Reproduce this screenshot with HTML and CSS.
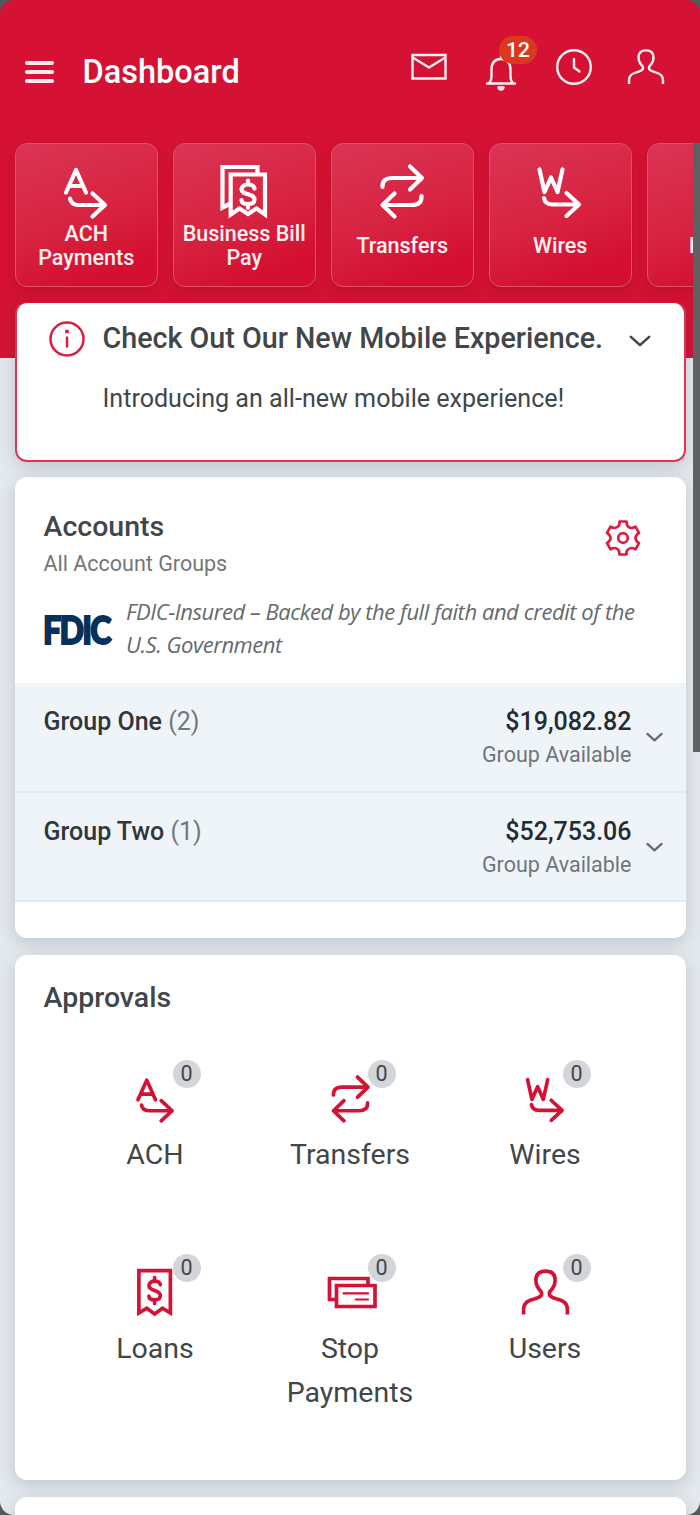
FILE: index.html
```html
<!DOCTYPE html>
<html lang="en">
<head>
<meta charset="utf-8">
<title>Dashboard</title>
<link rel="stylesheet" href="styles.css">
</head>
<body>
<svg class="defs" aria-hidden="true">
  <symbol id="ach" viewBox="1.500 0 56 56"><path d="M9.500 29.500 19.500 7 29.500 29.500M13 23h13M13.500 35.500q1 6.500 8.500 6.500h26M36 30.500 48.500 42 36 53.500"/></symbol>
  <symbol id="transfer" viewBox="0 0 56 56"><path d="M8.500 24v-1q0-8 10-8H48M36 3.500 48 15 36 26.500M47.500 33v1q0 8-10 8H8.500M20.500 30.500 8.500 42l12 11.500"/></symbol>
  <symbol id="wire" viewBox="0.500 0 56 56"><path d="m8 6.500 5 22.500 6.500-14.500L26 29l5-22.500M12.500 35q1 6.500 8.500 6.500h26M35 30 47.500 41.500 35 53"/></symbol>
  <symbol id="bills" viewBox="0.500 0.500 56 56"><path class="miter" d="M42 11V4.500H7V45l8-4M15.200 12H49.500v40L41 46l-8.500 5.500L24 46l-8.800 6z"/><path d="M39 26q-1-4-6.500-4t-6.500 4.500c0 6.500 13 4 13 10.500q0 4.500-6.500 4.500T26 37.500M32.500 18v4M32.500 41.500v4"/></symbol>
  <symbol id="loan" viewBox="1 1 56 56"><path class="miter" d="M10 4h36v48.500L37 47l-9 6.500L19 47l-9 5.500z"/><path d="M34.500 20q-1-4-6.500-4t-6.500 5c0 7 13 4.500 13 11.500q0 5-6.500 5t-6.500-4.500M28 12v4M28 37.500v4"/></symbol>
  <symbol id="stop" viewBox="1 1 56 56"><path class="miter" d="M49 20v-7H5v24h8M13 21h44v24H13z"/><path class="thin" d="M21 30h28M35 37h14"/></symbol>
  <symbol id="user" viewBox="0 0 56 56"><path class="flat" d="M3 53v-6c0-8 6-10 12-11.500 7-2 10-4 8-8.500-4-4-6-8-6-13 0-7 4-10.500 11-10.500S39 7 39 14c0 5-2 9-6 13-2 4.500 1 6.500 8 8.500C47 37 53 39 53 47v6"/></symbol>
  <symbol id="chevron" viewBox="0 0 24 14"><path d="m2 2 10 9L22 2"/></symbol>
</svg>

<div class="app">
  <header class="topbar">
    <div class="menu"><span></span><span></span><span></span></div>
    <h1 class="page-title">Dashboard</h1>
    <nav class="actions">
      <svg class="action" viewBox="0 0 38 38"><path class="miter" d="M2.500 7h33v23.500h-33z"/><path d="m3.500 10 15.500 9.500L34.500 10"/></svg>
      <div class="notify">
        <svg class="action" viewBox="0 0 38 38"><path d="M5 30.500h28M7 30Q9.500 27.500 9.500 24v-7C9.500 9.500 13 6 19 6s9.500 3.500 9.500 11v7q0 3.500 2.500 6M19 3v3"/><path class="solid" d="M16.500 34.500h5q-.5 2-2.500 2t-2.500-2z"/></svg>
        <span class="notify-count">12</span>
      </div>
      <svg class="action" viewBox="0 0 38 38"><circle cx="19" cy="19" r="16.800"/><path d="M19 11v8.500l5.500 4"/></svg>
      <svg class="action action-user"><use href="#user"/></svg>
    </nav>
  </header>

  <section class="tiles">
    <a class="tile"><svg class="tile-icon"><use href="#ach"/></svg><span class="tile-label">ACH<br>Payments</span></a>
    <a class="tile"><svg class="tile-icon"><use href="#bills"/></svg><span class="tile-label">Business Bill<br>Pay</span></a>
    <a class="tile"><svg class="tile-icon"><use href="#transfer"/></svg><span class="tile-label">Transfers</span></a>
    <a class="tile"><svg class="tile-icon"><use href="#wire"/></svg><span class="tile-label">Wires</span></a>
    <a class="tile"><span class="tile-icon"></span><span class="tile-label">Loans</span></a>
  </section>

  <main class="cards">
    <section class="card notice">
      <svg class="info" viewBox="0 0 38 38"><circle cx="19" cy="19" r="16.500"/><path d="M19 17.500v9"/><circle class="solid" cx="19" cy="11.500" r=".8"/></svg>
      <div class="notice-body">
        <h2 class="notice-title">Check Out Our New Mobile Experience.</h2>
        <p class="notice-text">Introducing an all-new mobile experience!</p>
      </div>
      <svg class="chevron"><use href="#chevron"/></svg>
    </section>

    <section class="card accounts">
      <div class="accounts-head">
        <div>
          <h2 class="card-title">Accounts</h2>
          <p class="subtitle">All Account Groups</p>
        </div>
        <svg class="gear" viewBox="-20 -20 40 40"><path d="M-3.500-16.500h7Q3.500-13 5-11.500T8.500-10Q10-10 12.500-11.300L16-5.200Q12.500-3 12.500 0T16 5.200L12.500 11.300Q10 10 8.500 10T5 11.500 3.500 16.500h-7Q-3.500 13-5 11.500T-8.500 10Q-10 10-12.500 11.300L-16 5.200Q-12.500 3-12.500 0T-16-5.200L-12.500-11.300Q-10-10-8.500-10T-5-11.500-3.500-16.500z"/><circle r="4.800"/></svg>
      </div>
      <div class="fdic">
        <strong class="fdic-logo">FDIC</strong>
        <p class="fdic-text">FDIC-Insured – Backed by the full faith and credit of the<br>U.S. Government</p>
      </div>
      <div class="group">
        <p class="group-name">Group One <span>(2)</span></p>
        <div class="group-balance"><b>$19,082.82</b><small>Group Available</small></div>
        <svg class="group-chevron"><use href="#chevron"/></svg>
      </div>
      <div class="group">
        <p class="group-name">Group Two <span>(1)</span></p>
        <div class="group-balance"><b>$52,753.06</b><small>Group Available</small></div>
        <svg class="group-chevron"><use href="#chevron"/></svg>
      </div>
    </section>

    <section class="card approvals">
      <h2 class="card-title">Approvals</h2>
      <div class="approval-grid">
        <a class="approval"><div class="approval-icon"><svg><use href="#ach"/></svg><span class="count">0</span></div>ACH</a>
        <a class="approval"><div class="approval-icon"><svg><use href="#transfer"/></svg><span class="count">0</span></div>Transfers</a>
        <a class="approval"><div class="approval-icon"><svg><use href="#wire"/></svg><span class="count">0</span></div>Wires</a>
        <a class="approval"><div class="approval-icon"><svg><use href="#loan"/></svg><span class="count">0</span></div>Loans</a>
        <a class="approval"><div class="approval-icon"><svg><use href="#stop"/></svg><span class="count">0</span></div>Stop<br>Payments</a>
        <a class="approval"><div class="approval-icon"><svg><use href="#user"/></svg><span class="count">0</span></div>Users</a>
      </div>
    </section>

    <section class="card next-card"></section>
  </main>
  <div class="scrollbar"></div>
</div>
</body>
</html>
```
FILE: styles.css
```css
* { box-sizing: border-box; }

body {
  margin: 0;
  background: #55585b;
  font-family: Roboto, "Liberation Sans", sans-serif;
  color: #414649;
}

h1, h2, p { margin: 0; font-weight: 500; }

svg {
  display: block;
  overflow: visible;
  fill: none;
  stroke: currentColor;
  stroke-linecap: round;
  stroke-linejoin: round;
}

symbol { overflow: visible; }
.defs { position: absolute; width: 0; height: 0; }
.miter { stroke-linejoin: miter; }
.flat { stroke-linecap: butt; }
.thin { stroke-width: 2.5px; }
.solid { fill: currentColor; }

.app {
  position: relative;
  width: 700px;
  height: 1515px;
  overflow: hidden;
  border-radius: 14px;
  background: linear-gradient(#d51233 358px, #e4e9ed 358px);
}

.topbar {
  display: flex;
  align-items: flex-start;
  height: 143px;
  padding: 0 35px 0 25px;
  color: #fff;
}

.menu {
  display: flex;
  flex-direction: column;
  gap: 5px;
  width: 29px;
  margin-top: 61px;
}
.menu span { height: 4px; border-radius: 2px; background: #fde9ec; }

.page-title {
  margin: 53px 0 0 28.500px;
  font-size: 32.500px;
  line-height: 38px;
}

.actions {
  display: flex;
  gap: 34.500px;
  margin: 48px 0 0 auto;
}
.action { width: 38px; height: 38px; stroke-width: 2.400px; color: #fff1f2; }
.action-user { stroke-width: 3.600px; }
.notify { position: relative; padding-top: 5px; }
.notify-count {
  position: absolute;
  left: 17px;
  top: -12px;
  width: 38px;
  height: 28px;
  border-radius: 14px;
  background: #dc3820;
  color: #fff;
  font-size: 21px;
  font-weight: 500;
  line-height: 28px;
  text-align: center;
}

.tiles {
  display: flex;
  gap: 14.500px;
  padding-left: 14.500px;
}
.tile {
  display: flex;
  flex: 0 0 143.500px;
  flex-direction: column;
  align-items: center;
  height: 144px;
  padding-top: 19px;
  border: 1.500px solid #e0506b;
  border-radius: 12px;
  background: linear-gradient(160deg, #db3454, #d72441 50%, #d40f30 85%);
  box-shadow: 0 4px 10px rgba(120, 10, 40, .25);
  color: #fff;
}
.tile-icon { width: 56px; height: 56px; stroke-width: 4.200px; }
.tile-label {
  display: flex;
  align-items: center;
  height: 48px;
  margin-top: 3px;
  color: #fff0f2;
  font-size: 21.500px;
  font-weight: 500;
  line-height: 24px;
  text-align: center;
  white-space: nowrap;
}

.cards {
  display: flex;
  flex-direction: column;
  gap: 17px;
  padding: 15px 14.500px 0;
}
.card {
  border-radius: 12px;
  background: #fff;
  box-shadow: 0 5px 17px rgba(45, 60, 75, .2);
}
.card-title { font-size: 28.500px; line-height: 34px; }

.notice {
  display: flex;
  align-items: flex-start;
  height: 160px;
  margin-bottom: -2px;
  padding: 15px 33px 0 31px;
  border: 2px solid #dd3654;
  border-top-width: 1px;
  border-top-color: #d51233;
}
.info { width: 38px; height: 38px; margin-top: 2px; stroke-width: 2.500px; color: #dc1c40; }
.notice-body { flex: 1; margin-left: 17px; white-space: nowrap; }
.notice-title { margin-top: 1px; font-size: 28.700px; line-height: 38px; }
.notice-text { margin-top: 26px; font-size: 25.100px; font-weight: 400; line-height: 32px; }
.chevron { width: 22px; height: 13px; margin-top: 17px; stroke-width: 2.800px; }

.accounts { height: 461px; }
.accounts-head {
  display: flex;
  justify-content: space-between;
  padding: 33px 43px 0 29px;
}
.subtitle { margin-top: 6px; color: #73777a; font-size: 21.500px; font-weight: 400; line-height: 28px; }
.gear { width: 40px; height: 40px; margin-top: 8px; stroke-width: 2.700px; color: #dc1c40; }

.fdic {
  display: flex;
  height: 105px;
  padding: 17px 0 0 28px;
}
.fdic-logo {
  width: 83.500px;
  padding-top: 15px;
  color: #07305a;
  font: 900 37px/40px Lato, sans-serif;
  letter-spacing: -2px;
  transform: scaleX(.87);
  transform-origin: left;
  -webkit-text-stroke: 1.800px #07305a;
}
.fdic-text {
  color: #65696c;
  font: italic 400 22px/33px "Open Sans", sans-serif;
  letter-spacing: -.45px;
  white-space: nowrap;
}

.group {
  display: flex;
  align-items: flex-start;
  height: 109.500px;
  padding: 23px 23px 0 29px;
  border-bottom: 2px solid #e3e9ee;
  background: #eff4f9;
}
.group-name { flex: 1; color: #30363c; font-size: 25px; line-height: 32px; }
.group-name span { color: #73777a; font-weight: 400; }
.group-balance { display: flex; flex-direction: column; text-align: right; }
.group-balance b { color: #252b32; font-size: 25px; font-weight: 500; line-height: 32px; }
.group-balance small { color: #70757a; font-size: 21.500px; line-height: 34px; }
.group-chevron { width: 17px; height: 11px; margin: 26px 0 0 14px; stroke-width: 3.400px; color: #686e72; }

.approvals { height: 525px; padding-top: 26px; }
.approvals .card-title { margin-left: 29px; }
.approval-grid {
  display: grid;
  grid-template-columns: repeat(3, 195px);
  grid-auto-rows: 194px;
  justify-content: center;
  margin-top: 59px;
}
.approval {
  display: flex;
  flex-direction: column;
  align-items: center;
  font-size: 28.500px;
  line-height: 43.500px;
  text-align: center;
}
.approval-icon { position: relative; margin-bottom: 10px; color: #d51233; }
.approval-icon svg { width: 49px; height: 49px; stroke-width: 4.200px; }
.approval-icon svg .thin { stroke-width: 2.5px; }
.count {
  position: absolute;
  left: 42px;
  top: -14px;
  width: 28px;
  height: 28px;
  border-radius: 50%;
  background: #d3d5d8;
  color: #44484b;
  font-size: 21.500px;
  line-height: 28px;
}

.next-card { height: 60px; }

.scrollbar {
  position: absolute;
  top: 143px;
  right: 0;
  width: 7px;
  height: 609px;
  background: #5f6061;
}
```
